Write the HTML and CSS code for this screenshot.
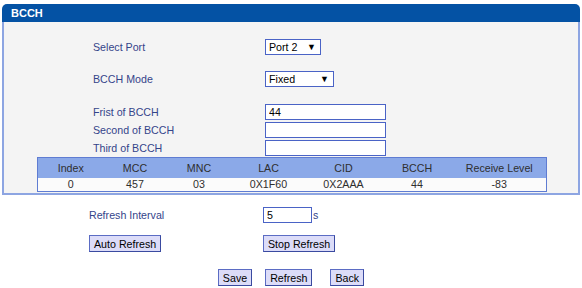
FILE: index.html
```html
<!DOCTYPE html>
<html lang="en">
<head>
    <meta charset="UTF-8">
    <title>BCCH</title>
    <link rel="stylesheet" href="styles.css">
</head>
<body>
    <div class="panel">
        <div class="panel-title">BCCH</div>
        <div class="panel-body">
            <div class="field field-port">
                <label>Select Port</label>
                <span class="select select-port">
                    <select><option>Port 2</option><option>Port 1</option></select>
                </span>
            </div>
            <div class="field field-mode">
                <label>BCCH Mode</label>
                <span class="select select-mode">
                    <select><option>Fixed</option><option>Auto</option></select>
                </span>
            </div>
            <div class="field field-bcch first">
                <label>Frist of BCCH</label>
                <input type="text" class="text-input" value="44">
            </div>
            <div class="field field-bcch">
                <label>Second of BCCH</label>
                <input type="text" class="text-input" value="">
            </div>
            <div class="field field-bcch">
                <label>Third of BCCH</label>
                <input type="text" class="text-input" value="">
            </div>

            <table class="bcch-table">
                <colgroup>
                    <col style="width:66px"><col style="width:63px"><col style="width:65px">
                    <col style="width:74px"><col style="width:76px"><col style="width:71px">
                    <col style="width:94px">
                </colgroup>
                <thead>
                    <tr>
                        <th>Index</th><th>MCC</th><th>MNC</th><th>LAC</th>
                        <th>CID</th><th>BCCH</th><th>Receive Level</th>
                    </tr>
                </thead>
                <tbody>
                    <tr>
                        <td>0</td><td>457</td><td>03</td><td>0X1F60</td>
                        <td>0X2AAA</td><td>44</td><td>-83</td>
                    </tr>
                </tbody>
            </table>
        </div>
    </div>

    <div class="refresh">
        <div class="field field-interval">
            <label>Refresh Interval</label>
            <input type="text" class="text-input interval" value="5"><span class="unit">s</span>
        </div>
        <div class="field field-buttons">
            <span class="btn-cell"><button class="btn">Auto Refresh</button></span>
            <button class="btn">Stop Refresh</button>
        </div>
    </div>

    <div class="actions">
        <button class="btn">Save</button>
        <button class="btn btn-refresh">Refresh</button>
        <button class="btn btn-back">Back</button>
    </div>
</body>
</html>
```

FILE: styles.css
```css
/* Base */
* {
    margin: 0;
    padding: 0;
    box-sizing: border-box;
    font-family: "Liberation Sans", Arial, sans-serif;
}

body {
    background: #ffffff;
    font-size: 8pt;
    color: #333;
}

/* Panel */
.panel {
    margin: 4px 2px 0 2px;
}

.panel-title {
    height: 18px;
    line-height: 18px;
    padding-left: 9px;
    background: #0452a4;
    color: #ffffff;
    font-size: 11px;
    font-weight: bold;
    border-radius: 5px 5px 0 0;
}

.panel-body {
    background: #f4f4f4;
    border: 2px solid #8da5e2;
    border-top: none;
    padding: 16px 0 1px 0;
}

/* Form rows */
.field {
    display: flex;
    align-items: center;
    height: 17px;
    padding-left: 89px;
}

.field label {
    width: 172px;
    color: #34448a;
}

.field-mode {
    margin-top: 15px;
}

.field-bcch {
    height: 18px;
}

.field-bcch.first {
    margin-top: 16px;
}

/* Controls */
.text-input {
    width: 121px;
    height: 16px;
    border: 1px solid #4a63c6;
    background: #ffffff;
    padding: 0 3px;
    font-size: 8pt;
    color: #000;
    outline: none;
}

.select {
    position: relative;
    display: inline-block;
    height: 16px;
}

.select select {
    appearance: none;
    -webkit-appearance: none;
    width: 100%;
    height: 16px;
    border: 1px solid #4a63c6;
    background: #ffffff;
    padding: 0 3px;
    font-size: 8pt;
    color: #000;
    outline: none;
}

.select::after {
    content: "\25BC";
    position: absolute;
    right: 5px;
    top: 2px;
    font-size: 9px;
    line-height: 12px;
    color: #000;
    pointer-events: none;
}

.select-port {
    width: 56px;
}

.select-mode {
    width: 69px;
}

/* Table */
.bcch-table {
    margin-left: 33px;
    width: 509px;
    border-collapse: collapse;
    border: 1px solid #5f7cd2;
    table-layout: fixed;
}

.bcch-table th {
    height: 20px;
    background: #8ba9e8;
    color: #2e2e2e;
    font-weight: normal;
    text-align: center;
}

.bcch-table td {
    height: 14px;
    background: #fbfbfb;
    color: #2e2e2e;
    text-align: center;
}

/* Refresh block */
.refresh .field {
    padding-left: 89px;
}

.refresh .field label,
.btn-cell {
    width: 174px;
}

.field-interval {
    margin-top: 12px;
    height: 16px;
}

.interval {
    width: 49px;
}

.unit {
    color: #34448a;
    margin-left: 1px;
}

.field-buttons {
    margin-top: 12px;
}

/* Buttons */
.btn {
    height: 17px;
    padding: 0 4px;
    background: #dcdcf8;
    border: 1px solid #5b6cc4;
    border-right-color: #3a4aa0;
    border-bottom-color: #3a4aa0;
    color: #000;
    font-size: 8pt;
    cursor: pointer;
}

.actions {
    display: flex;
    justify-content: center;
    margin-top: 17px;
}

.btn-refresh {
    margin-left: 13px;
}

.btn-back {
    margin-left: 18px;
}
```
